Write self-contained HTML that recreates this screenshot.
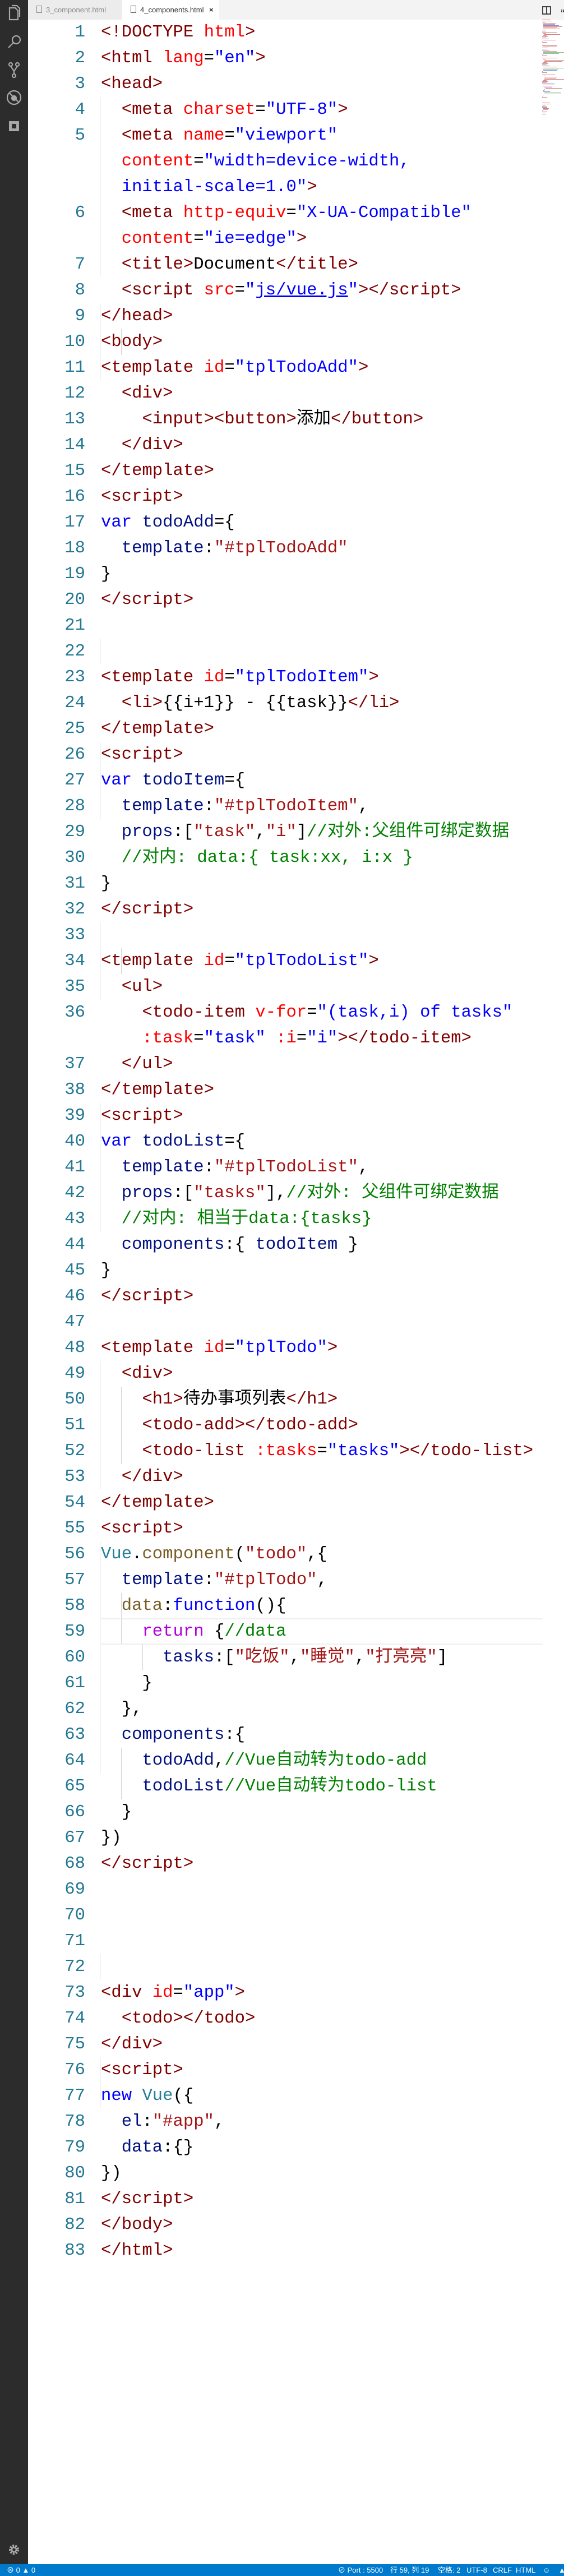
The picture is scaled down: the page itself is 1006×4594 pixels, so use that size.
<!DOCTYPE html>
<html><head><meta charset="utf-8">
<style>
*{margin:0;padding:0;box-sizing:border-box}
html,body{width:1006px;height:4594px;overflow:hidden;background:#fff;position:relative}
#act{position:absolute;left:0;top:0;width:50px;height:4573px;background:#2c2c2c}
#tabs{position:absolute;left:50px;top:0;right:0;height:35px;background:#f3f3f3}
.tab{position:absolute;top:0;height:35px;font:13px "Liberation Sans",sans-serif;line-height:35px}
#nums{position:absolute;left:50px;top:35px;width:102px;text-align:right;font:30.6px "Liberation Mono",monospace;line-height:46px;color:#237893;white-space:pre}
#code{position:absolute;left:180px;top:35px;font:30.6px "Liberation Mono","Noto Sans CJK SC",monospace;line-height:46px;color:#000;white-space:pre}
.t{color:#800000}.a{color:#f00}.v{color:#00f}.k{color:#00f}.c{color:#008000}.s{color:#a31515}.p{color:#001080}.r{color:#af00db}.f{color:#795e26}.n{color:#267f99}
#status{position:absolute;left:0;top:4573px;width:1006px;height:21px;background:#007acc;color:#fff;font:13px "Liberation Sans","Noto Sans CJK SC",sans-serif;line-height:21px}
#status span{position:absolute;top:0}
.g{position:absolute;width:1px;background:#d3d3d3}
</style></head><body>
<div id="act">
<svg width="50" height="260" viewBox="0 0 50 260" fill="none" stroke="#a8a8a8" stroke-width="2.2">
<path d="M17 14h10l5 5v16H17z"/><path d="M21 10h9l5 5v15"/>
<circle cx="29" cy="71" r="7"/><path d="M24 76l-9 9"/>
<circle cx="19" cy="115" r="3"/><circle cx="31" cy="115" r="3"/><circle cx="25" cy="135" r="3"/><path d="M19 118l6 9 6-9M25 127v5"/>
<circle cx="25" cy="174" r="12"/><path d="M17 166l16 16"/><circle cx="25" cy="175" r="4" fill="#a8a8a8"/>
<rect x="16" y="216" width="18" height="18" fill="#a8a8a8" stroke="none"/><rect x="21" y="221" width="8" height="8" fill="#2c2c2c" stroke="none"/>
</svg>
<svg style="position:absolute;left:15px;top:4537px" width="20" height="20" viewBox="0 0 20 20"><circle cx="10" cy="10" r="7" fill="none" stroke="#a8a8a8" stroke-width="4" stroke-dasharray="3 2"/><circle cx="10" cy="10" r="4" fill="none" stroke="#a8a8a8" stroke-width="2.5"/></svg>
</div>
<div id="tabs">
<div class="tab" style="left:0;width:168px;background:#ececec;color:#8a8a8a"><span style="position:absolute;left:15px;top:10px;width:10px;height:13px;border:1px solid #888"></span><span style="position:absolute;left:32px">3_component.html</span></div>
<div class="tab" style="left:168px;width:173px;background:#fff;color:#333"><span style="position:absolute;left:15px;top:10px;width:10px;height:13px;border:1px solid #555"></span><span style="position:absolute;left:32px">4_components.html</span><span style="position:absolute;left:155px;font-weight:bold">×</span></div>
<div style="position:absolute;left:917px;top:11px;width:16px;height:15px;border:2px solid #444"><div style="position:absolute;left:5px;top:0;width:2px;height:11px;background:#444"></div></div>
<div style="position:absolute;left:951px;top:17px;width:5px;height:3px;border-left:2px dotted #444;border-right:2px dotted #444"></div>
</div>
<div class="g" style="left:178px;top:173px;height:321px"></div>
<div class="g" style="left:178px;top:541px;height:139px"></div>
<div class="g" style="left:216px;top:587px;height:46px"></div>
<div class="g" style="left:178px;top:1139px;height:46px"></div>
<div class="g" style="left:178px;top:1323px;height:139px"></div>
<div class="g" style="left:178px;top:1645px;height:139px"></div>
<div class="g" style="left:216px;top:1691px;height:46px"></div>
<div class="g" style="left:178px;top:1967px;height:230px"></div>
<div class="g" style="left:178px;top:2427px;height:230px"></div>
<div class="g" style="left:216px;top:2473px;height:138px"></div>
<div class="g" style="left:178px;top:2749px;height:414px"></div>
<div class="g" style="left:216px;top:2841px;height:92px"></div>
<div class="g" style="left:254px;top:2933px;height:46px"></div>
<div class="g" style="left:216px;top:3117px;height:92px"></div>
<div class="g" style="left:178px;top:3485px;height:46px"></div>
<div class="g" style="left:178px;top:3669px;height:92px"></div>
<div style="position:absolute;left:180px;top:2886px;width:788px;height:47px;border-top:2px solid #eee;border-bottom:2px solid #eee"></div>
<div id="nums">1
2
3
4
5


6

7
8
9
10
11
12
13
14
15
16
17
18
19
20
21
22
23
24
25
26
27
28
29
30
31
32
33
34
35
36

37
38
39
40
41
42
43
44
45
46
47
48
49
50
51
52
53
54
55
56
57
58
59
60
61
62
63
64
65
66
67
68
69
70
71
72
73
74
75
76
77
78
79
80
81
82
83</div>
<div id="code"><span class="t">&lt;!DOCTYPE</span> <span class="a">html</span><span class="t">&gt;</span>
<span class="t">&lt;html</span> <span class="a">lang</span>=<span class="v">"en"</span><span class="t">&gt;</span>
<span class="t">&lt;head&gt;</span>
  <span class="t">&lt;meta</span> <span class="a">charset</span>=<span class="v">"UTF-8"</span><span class="t">&gt;</span>
  <span class="t">&lt;meta</span> <span class="a">name</span>=<span class="v">"viewport"</span>
  <span class="a">content</span>=<span class="v">"width=device-width,</span>
<span class="v">  initial-scale=1.0"</span><span class="t">&gt;</span>
  <span class="t">&lt;meta</span> <span class="a">http-equiv</span>=<span class="v">"X-UA-Compatible"</span>
  <span class="a">content</span>=<span class="v">"ie=edge"</span><span class="t">&gt;</span>
  <span class="t">&lt;title&gt;</span>Document<span class="t">&lt;/title&gt;</span>
  <span class="t">&lt;script</span> <span class="a">src</span>=<span class="v">"<u>js/vue.js</u>"</span><span class="t">&gt;&lt;/script&gt;</span>
<span class="t">&lt;/head&gt;</span>
<span class="t">&lt;body&gt;</span>
<span class="t">&lt;template</span> <span class="a">id</span>=<span class="v">"tplTodoAdd"</span><span class="t">&gt;</span>
  <span class="t">&lt;div&gt;</span>
    <span class="t">&lt;input&gt;&lt;button&gt;</span>添加<span class="t">&lt;/button&gt;</span>
  <span class="t">&lt;/div&gt;</span>
<span class="t">&lt;/template&gt;</span>
<span class="t">&lt;script&gt;</span>
<span class="k">var</span> <span class="p">todoAdd</span>={
  <span class="p">template</span>:<span class="s">"#tplTodoAdd"</span>
}
<span class="t">&lt;/script&gt;</span>


<span class="t">&lt;template</span> <span class="a">id</span>=<span class="v">"tplTodoItem"</span><span class="t">&gt;</span>
  <span class="t">&lt;li&gt;</span>{{i+1}} - {{task}}<span class="t">&lt;/li&gt;</span>
<span class="t">&lt;/template&gt;</span>
<span class="t">&lt;script&gt;</span>
<span class="k">var</span> <span class="p">todoItem</span>={
  <span class="p">template</span>:<span class="s">"#tplTodoItem"</span>,
  <span class="p">props</span>:[<span class="s">"task"</span>,<span class="s">"i"</span>]<span class="c">//对外:父组件可绑定数据</span>
  <span class="c">//对内: data:{ task:xx, i:x }</span>
}
<span class="t">&lt;/script&gt;</span>

<span class="t">&lt;template</span> <span class="a">id</span>=<span class="v">"tplTodoList"</span><span class="t">&gt;</span>
  <span class="t">&lt;ul&gt;</span>
    <span class="t">&lt;todo-item</span> <span class="a">v-for</span>=<span class="v">"(task,i) of tasks"</span>
    <span class="a">:task</span>=<span class="v">"task"</span> <span class="a">:i</span>=<span class="v">"i"</span><span class="t">&gt;&lt;/todo-item&gt;</span>
  <span class="t">&lt;/ul&gt;</span>
<span class="t">&lt;/template&gt;</span>
<span class="t">&lt;script&gt;</span>
<span class="k">var</span> <span class="p">todoList</span>={
  <span class="p">template</span>:<span class="s">"#tplTodoList"</span>,
  <span class="p">props</span>:[<span class="s">"tasks"</span>],<span class="c">//对外: 父组件可绑定数据</span>
  <span class="c">//对内: 相当于data:{tasks}</span>
  <span class="p">components</span>:{ <span class="p">todoItem</span> }
}
<span class="t">&lt;/script&gt;</span>

<span class="t">&lt;template</span> <span class="a">id</span>=<span class="v">"tplTodo"</span><span class="t">&gt;</span>
  <span class="t">&lt;div&gt;</span>
    <span class="t">&lt;h1&gt;</span>待办事项列表<span class="t">&lt;/h1&gt;</span>
    <span class="t">&lt;todo-add&gt;&lt;/todo-add&gt;</span>
    <span class="t">&lt;todo-list</span> <span class="a">:tasks</span>=<span class="v">"tasks"</span><span class="t">&gt;&lt;/todo-list&gt;</span>
  <span class="t">&lt;/div&gt;</span>
<span class="t">&lt;/template&gt;</span>
<span class="t">&lt;script&gt;</span>
<span class="n">Vue</span>.<span class="f">component</span>(<span class="s">"todo"</span>,{
  <span class="p">template</span>:<span class="s">"#tplTodo"</span>,
  <span class="f">data</span>:<span class="k">function</span>(){
    <span class="r">return</span> {<span class="c">//data</span>
      <span class="p">tasks</span>:[<span class="s">"吃饭"</span>,<span class="s">"睡觉"</span>,<span class="s">"打亮亮"</span>]
    }
  },
  <span class="p">components</span>:{
    <span class="p">todoAdd</span>,<span class="c">//Vue自动转为todo-add</span>
    <span class="p">todoList</span><span class="c">//Vue自动转为todo-list</span>
  }
})
<span class="t">&lt;/script&gt;</span>




<span class="t">&lt;div</span> <span class="a">id</span>=<span class="v">"app"</span><span class="t">&gt;</span>
  <span class="t">&lt;todo&gt;&lt;/todo&gt;</span>
<span class="t">&lt;/div&gt;</span>
<span class="t">&lt;script&gt;</span>
<span class="k">new</span> <span class="n">Vue</span>({
  <span class="p">el</span>:<span class="s">"#app"</span>,
  <span class="p">data</span>:{}
})
<span class="t">&lt;/script&gt;</span>
<span class="t">&lt;/body&gt;</span>
<span class="t">&lt;/html&gt;</span></div>
<svg style="position:absolute;left:967px;top:35px" width="39" height="180" viewBox="0 0 39 180">
<g fill="#c05050" opacity="0.7">
<rect x="0" y="0" width="15" height="1"/><rect x="0" y="2" width="16" height="1"/><rect x="0" y="4" width="6" height="1"/>
<rect x="2" y="6" width="22" height="1"/><rect x="2" y="8" width="21" height="1"/><rect x="2" y="10" width="28" height="1" fill="#5060d0"/>
<rect x="2" y="12" width="34" height="1"/><rect x="2" y="14" width="24" height="1"/><rect x="2" y="16" width="30" height="1"/>
<rect x="0" y="18" width="7" height="1"/><rect x="0" y="20" width="6" height="1"/><rect x="0" y="22" width="26" height="1"/>
<rect x="2" y="24" width="5" height="1"/><rect x="4" y="26" width="28" height="1"/><rect x="2" y="28" width="6" height="1"/>
<rect x="0" y="30" width="11" height="1"/><rect x="0" y="32" width="8" height="1"/><rect x="0" y="34" width="12" height="1" fill="#5060d0"/>
<rect x="2" y="36" width="22" height="1"/><rect x="0" y="38" width="1" height="1"/><rect x="0" y="40" width="9" height="1"/>
<rect x="0" y="46" width="27" height="1"/><rect x="2" y="48" width="24" height="1"/><rect x="0" y="50" width="11" height="1"/>
<rect x="0" y="52" width="8" height="1"/><rect x="0" y="54" width="13" height="1" fill="#5060d0"/><rect x="2" y="56" width="24" height="1"/>
<rect x="2" y="58" width="39" height="1" fill="#60a060"/><rect x="2" y="60" width="28" height="1" fill="#60a060"/><rect x="0" y="62" width="1" height="1"/>
<rect x="0" y="64" width="9" height="1"/><rect x="0" y="68" width="27" height="1"/><rect x="2" y="70" width="5" height="1"/>
<rect x="4" y="72" width="38" height="1"/><rect x="4" y="74" width="32" height="1"/><rect x="2" y="76" width="6" height="1"/>
<rect x="0" y="78" width="11" height="1"/><rect x="0" y="80" width="8" height="1"/><rect x="0" y="82" width="13" height="1" fill="#5060d0"/>
<rect x="2" y="84" width="24" height="1"/><rect x="2" y="86" width="39" height="1" fill="#60a060"/><rect x="2" y="88" width="26" height="1" fill="#60a060"/>
<rect x="2" y="90" width="24" height="1" fill="#5060d0"/><rect x="0" y="92" width="1" height="1"/><rect x="0" y="94" width="9" height="1"/>
<rect x="0" y="98" width="23" height="1"/><rect x="2" y="100" width="5" height="1"/><rect x="4" y="102" width="22" height="1"/>
<rect x="4" y="104" width="21" height="1"/><rect x="4" y="106" width="38" height="1"/><rect x="2" y="108" width="6" height="1"/>
<rect x="0" y="110" width="11" height="1"/><rect x="0" y="112" width="8" height="1"/><rect x="0" y="114" width="22" height="1" fill="#5060d0"/>
<rect x="2" y="116" width="20" height="1"/><rect x="2" y="118" width="16" height="1"/><rect x="4" y="120" width="14" height="1" fill="#a050c0"/>
<rect x="6" y="122" width="30" height="1"/><rect x="4" y="124" width="1" height="1"/><rect x="2" y="126" width="2" height="1"/>
<rect x="2" y="128" width="12" height="1" fill="#5060d0"/><rect x="4" y="130" width="30" height="1" fill="#60a060"/><rect x="4" y="132" width="30" height="1" fill="#60a060"/>
<rect x="2" y="134" width="1" height="1"/><rect x="0" y="136" width="2" height="1"/><rect x="0" y="138" width="9" height="1"/>
<rect x="0" y="148" width="14" height="1"/><rect x="2" y="150" width="13" height="1"/><rect x="0" y="152" width="6" height="1"/>
<rect x="0" y="154" width="8" height="1"/><rect x="0" y="156" width="9" height="1" fill="#5060d0"/><rect x="2" y="158" width="10" height="1"/>
<rect x="2" y="160" width="8" height="1"/><rect x="0" y="162" width="2" height="1"/><rect x="0" y="164" width="9" height="1"/>
<rect x="0" y="166" width="7" height="1"/><rect x="0" y="168" width="7" height="1"/>
</g></svg>
<div id="status">
<span style="left:12px">⊗ 0 ▲ 0</span>
<span style="left:603px">⊘ Port : 5500</span>
<span style="left:696px">行 59, 列 19</span>
<span style="left:781px">空格: 2</span>
<span style="left:832px">UTF-8</span>
<span style="left:879px">CRLF</span>
<span style="left:920px">HTML</span>
<span style="left:968px">☺</span>
<span style="left:996px">▲</span>
</div>
</body></html>
